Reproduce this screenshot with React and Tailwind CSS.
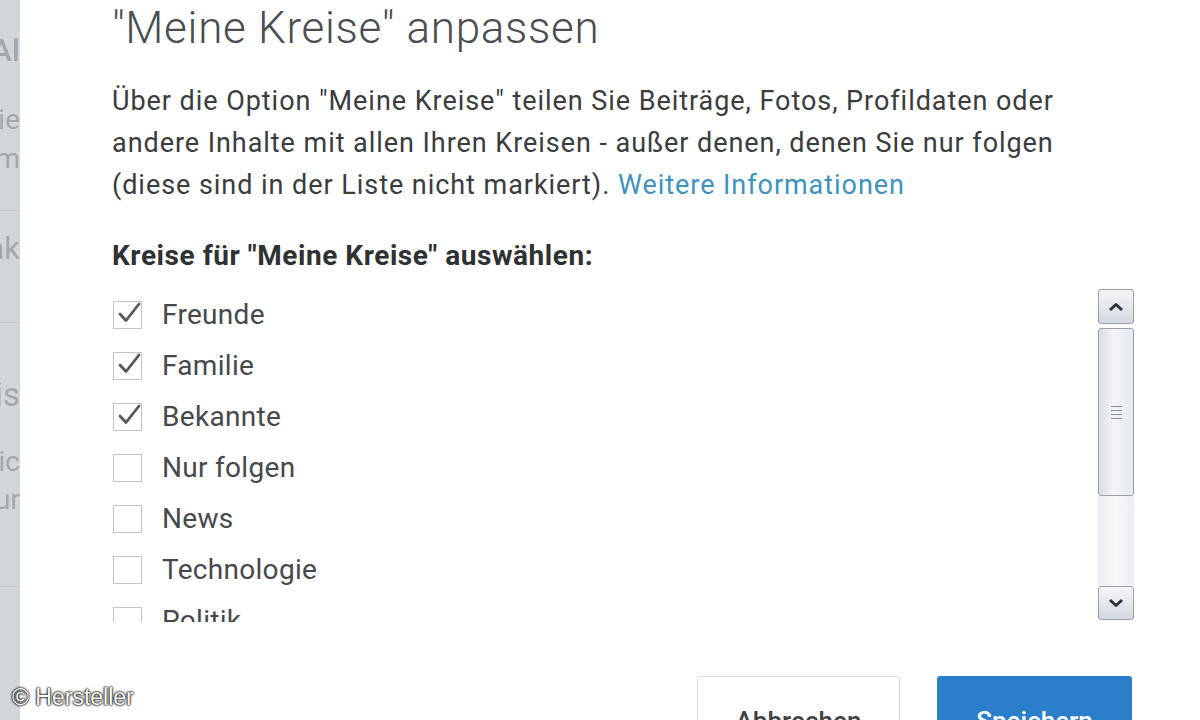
import React from "react";

const items = [
  { label: "Freunde", checked: true },
  { label: "Familie", checked: true },
  { label: "Bekannte", checked: true },
  { label: "Nur folgen", checked: false },
  { label: "News", checked: false },
  { label: "Technologie", checked: false },
  { label: "Politik", checked: false },
];

function Box({ checked }) {
  return (
    <div className="relative w-[29px] h-[28px] border border-[#c4c4c4] bg-white shrink-0">
      {checked && (
        <svg className="absolute left-[2px] top-[-3px]" width="28" height="28" viewBox="0 0 28 28">
          <path d="M4 15 L10 21.5 L23 5" fill="none" stroke="#54585c" strokeWidth="2.8" strokeLinecap="round" strokeLinejoin="round" />
        </svg>
      )}
    </div>
  );
}

function Scrollbar() {
  return (
    <div className="w-[36px] h-[331px] flex flex-col shrink-0">
      <div className="h-[35px] rounded-[3px] border border-[#9aa0a8] bg-[linear-gradient(to_bottom,#f4f5f8,#d3d8e2)] flex items-center justify-center">
        <svg width="18" height="12" viewBox="0 0 18 12"><path d="M3 9 L9 3.5 L15 9" fill="none" stroke="#2e3338" strokeWidth="3" strokeLinejoin="round" /></svg>
      </div>
      <div className="mt-[4px] h-[168px] rounded-[3px] border border-[#9aa0a8] bg-[linear-gradient(to_right,#d9dde6,#f3f5f9_45%,#e4e8ef)] flex items-center justify-center">
        <div className="flex flex-col gap-[3px] w-[11px]">
          <div className="h-[1px] bg-[#8a9099]" />
          <div className="h-[1px] bg-[#8a9099]" />
          <div className="h-[1px] bg-[#8a9099]" />
          <div className="h-[1px] bg-[#8a9099]" />
        </div>
      </div>
      <div className="flex-1 bg-[linear-gradient(to_right,#eceff4,#f7f8fa,#eceff4)]" />
      <div className="h-[34px] rounded-[3px] border border-[#9aa0a8] bg-[linear-gradient(to_bottom,#f4f5f8,#d3d8e2)] flex items-center justify-center">
        <svg width="18" height="12" viewBox="0 0 18 12"><path d="M3 3 L9 8.5 L15 3" fill="none" stroke="#2e3338" strokeWidth="3" strokeLinejoin="round" /></svg>
      </div>
    </div>
  );
}

export default function App() {
  return (
    <div className="relative w-[1200px] h-[720px] overflow-hidden flex bg-white" style={{ fontFamily: "Roboto, 'Noto Sans', sans-serif" }}>
      {/* background page strip */}
      <div className="w-[20px] shrink-0 bg-[#d2d6d8] overflow-hidden flex flex-col text-[#a3a8ab] blur-[0.4px]">
        <div className="mt-[34px] flex justify-end text-[32px] leading-[32px] font-medium whitespace-nowrap">Al</div>
        <div className="mt-[38px] flex justify-end text-[28px] leading-[32px] whitespace-nowrap">Sie</div>
        <div className="mt-[7px] flex justify-end text-[28px] leading-[32px] whitespace-nowrap">Form</div>
        <div className="mt-[35px] h-[1px] bg-[#c6cacc]" />
        <div className="mt-[21px] flex justify-end text-[31px] leading-[34px] whitespace-nowrap">Pak</div>
        <div className="mt-[56px] h-[1px] bg-[#c6cacc]" />
        <div className="mt-[55px] flex justify-end text-[33px] leading-[34px] whitespace-nowrap">Dis</div>
        <div className="mt-[34px] flex justify-end text-[28px] leading-[32px] whitespace-nowrap">sic</div>
        <div className="mt-[6px] flex justify-end text-[28px] leading-[32px] whitespace-nowrap">nur</div>
        <div className="mt-[70px] h-[1px] bg-[#c6cacc]" />
      </div>

      {/* dialog */}
      <div className="flex-1 bg-white shadow-[-3px_0_5px_rgba(0,0,0,0.08)] pl-[92px] pr-[66px] flex flex-col">
        <div className="mt-[4px] text-[44px] leading-[48px] font-light text-[#4a4d50] tracking-[0.7px]">"Meine Kreise" anpassen</div>
        <p className="mt-[28px] w-[1000px] text-[27px] leading-[42px] text-[#3a3c3e] tracking-[0.95px]">
          Über die Option "Meine Kreise" teilen Sie Beiträge, Fotos, Profildaten oder<br />
          andere Inhalte mit allen Ihren Kreisen - außer denen, denen Sie nur folgen<br />
          (diese sind in der Liste nicht markiert). <span className="text-[#3f93c0]">Weitere Informationen</span>
        </p>
        <div className="mt-[34px] text-[28px] leading-[32px] font-bold text-[#2f3133] tracking-[0.55px]">Kreise für "Meine Kreise" auswählen:</div>
        <div className="mt-[17px] flex h-[333px]">
          <div className="flex-1 overflow-hidden">
            {items.map((it) => (
              <div key={it.label} className="h-[51px] flex items-center gap-[20px] pl-[1px]">
                <Box checked={it.checked} />
                <span className="text-[28px] leading-[51px] text-[#46494c] tracking-[0.3px]">{it.label}</span>
              </div>
            ))}
          </div>
          <Scrollbar />
        </div>
        <div className="mt-[54px] flex justify-end gap-[37px] pr-[2px]">
          <div className="w-[203px] h-[70px] rounded-[3px] border border-[#dadada] bg-white pt-[30px] text-center text-[26px] leading-[28px] font-medium text-[#404244]">Abbrechen</div>
          <div className="w-[195px] h-[70px] rounded-[3px] bg-[#2b7fca] pt-[31px] text-center text-[26px] leading-[28px] font-medium text-white">Speichern</div>
        </div>
      </div>

      {/* watermark */}
      <div className="absolute left-[12px] top-[683px] text-[23px] leading-[28px] text-white" style={{ fontFamily: "'Liberation Sans', Arial, sans-serif", textShadow: "0 0 3px #000, 0 0 2px #000, 0 0 1px #000" }}>© Hersteller</div>
    </div>
  );
}
